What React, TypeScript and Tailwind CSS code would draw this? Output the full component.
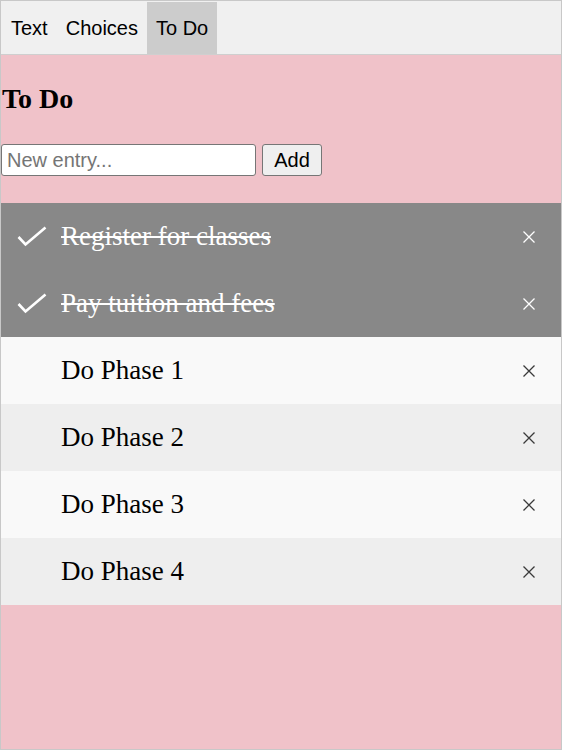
import { useState } from 'react';

type Item = { text: string; done: boolean };

const initial: Item[] = [
  { text: 'Register for classes', done: true },
  { text: 'Pay tuition and fees', done: true },
  { text: 'Do Phase 1', done: false },
  { text: 'Do Phase 2', done: false },
  { text: 'Do Phase 3', done: false },
  { text: 'Do Phase 4', done: false },
];

function Check() {
  return (
    <svg width="30" height="22" viewBox="0 0 30 22" className="shrink-0">
      <polyline points="1.5,11 8.5,18.5 28.5,1.5" fill="none" stroke="white" strokeWidth="2.6" />
    </svg>
  );
}

function Cross({ light }: { light: boolean }) {
  return (
    <svg width="12" height="12" viewBox="0 0 12 12">
      <path d="M0.5 0.5 L11.5 11.5 M11.5 0.5 L0.5 11.5" stroke={light ? 'white' : '#3a3a3a'} strokeWidth="1.3" />
    </svg>
  );
}

export default function App() {
  const [tab, setTab] = useState('To Do');
  const [items, setItems] = useState<Item[]>(initial);
  const [entry, setEntry] = useState('');

  const add = () => {
    if (!entry.trim()) return;
    setItems([...items, { text: entry, done: false }]);
    setEntry('');
  };

  return (
    <div className="min-h-[750px] bg-[#f0c2c9] border border-[#c8c8c8] font-['Liberation_Sans',Arial,sans-serif]">
      <nav className="flex h-[54px] items-stretch bg-[#f0f0f0] border-b border-[#cfcfcf] pt-px">
        {['Text', 'Choices', 'To Do'].map((t) => (
          <button
            key={t}
            onClick={() => setTab(t)}
            className={`px-[9px] pb-px text-[20px] text-black first:pl-[10px] ${tab === t ? 'bg-[#cccccc]' : ''}`}
          >
            {t}
          </button>
        ))}
      </nav>

      <h2 className="mt-[29px] mb-0 pl-px text-[28px] font-bold leading-[30px] font-['Liberation_Serif','Times_New_Roman',serif]">
        To Do
      </h2>

      <div className="mt-[30px] flex items-center gap-[6px]">
        <input
          value={entry}
          onChange={(e) => setEntry(e.target.value)}
          placeholder="New entry..."
          className="h-[32px] w-[255px] rounded-[3px] border border-[#767676] bg-white px-[5px] text-[20px] placeholder:text-[#757575] outline-none"
        />
        <button
          onClick={add}
          className="h-[32px] w-[60px] rounded-[3px] border border-[#767676] bg-[#efefef] text-[20px] text-black"
        >
          Add
        </button>
      </div>

      <ul className="mt-[27px]">
        {items.map((it, i) => (
          <li
            key={i}
            className={`flex h-[67px] items-center pl-[16px] pr-[22px] font-['Liberation_Serif','Times_New_Roman',serif] text-[27px] ${
              it.done ? 'bg-[#888888] text-white' : i % 2 === 0 ? 'bg-[#f9f9f9] text-black' : 'bg-[#eeeeee] text-black'
            }`}
          >
            <div className="w-[44px] shrink-0">{it.done && <Check />}</div>
            <span className={`flex-1 ${it.done ? 'line-through' : ''}`}>{it.text}</span>
            <button
              onClick={() => setItems(items.filter((_, j) => j !== i))}
              className="flex h-[20px] w-[20px] items-center justify-center"
            >
              <Cross light={it.done} />
            </button>
          </li>
        ))}
      </ul>
    </div>
  );
}
